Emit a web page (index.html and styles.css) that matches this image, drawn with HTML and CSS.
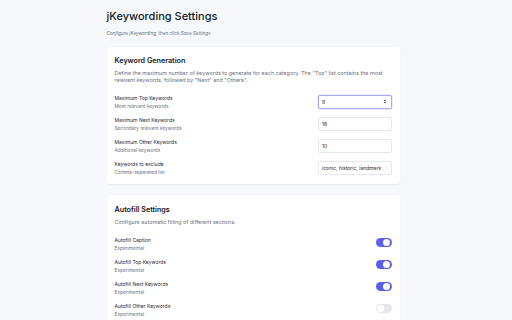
FILE: index.html
```html
<!DOCTYPE html>
<html lang="en">
  <head>
    <meta charset="UTF-8" />
    <meta name="viewport" content="width=device-width, initial-scale=1.0" />
    <title>jKeywording Settings</title>
    <link rel="stylesheet" href="styles.css">
  </head>
  <body>
    <div class="page">
      <h1 class="page-title">jKeywording Settings</h1>
      <p class="page-subtitle">Configure jKeywording, then click Save Settings</p>

      <div class="card">
        <h2 class="card-title">Keyword Generation</h2>
        <p class="card-desc">Define the maximum number of keywords to generate for each category. The "Top" list contains the most relevant keywords, followed by "Next" and "Others".</p>

        <div class="rows">
          <div class="row">
            <div class="row-text">
              <div class="row-label">Maximum Top Keywords</div>
              <div class="row-hint">Most relevant keywords</div>
            </div>
            <div class="field focused">
              <span class="field-value">9</span>
              <svg class="spinner" width="4" height="5" viewBox="0 0 4 5">
                <path d="M0.6 2 L2 0.6 L3.4 2 Z M0.6 3 L2 4.4 L3.4 3 Z" fill="#4b5563" />
              </svg>
            </div>
          </div>
          <div class="row">
            <div class="row-text">
              <div class="row-label">Maximum Next Keywords</div>
              <div class="row-hint">Secondary relevant keywords</div>
            </div>
            <div class="field"><span class="field-value">16</span></div>
          </div>
          <div class="row">
            <div class="row-text">
              <div class="row-label">Maximum Other Keywords</div>
              <div class="row-hint">Additional keywords</div>
            </div>
            <div class="field"><span class="field-value">10</span></div>
          </div>
          <div class="row">
            <div class="row-text">
              <div class="row-label">Keywords to exclude</div>
              <div class="row-hint">Comma-separated list</div>
            </div>
            <div class="field"><span class="field-value">iconic, historic, landmark</span></div>
          </div>
        </div>
      </div>

      <div class="card">
        <h2 class="card-title">Autofill Settings</h2>
        <p class="card-desc">Configure automatic filling of different sections.</p>

        <div class="rows">
          <div class="row">
            <div class="row-text">
              <div class="row-label">Autofill Caption</div>
              <div class="row-hint">Experimental</div>
            </div>
            <span class="toggle on"><span class="knob"></span></span>
          </div>
          <div class="row">
            <div class="row-text">
              <div class="row-label">Autofill Top Keywords</div>
              <div class="row-hint">Experimental</div>
            </div>
            <span class="toggle on"><span class="knob"></span></span>
          </div>
          <div class="row">
            <div class="row-text">
              <div class="row-label">Autofill Next Keywords</div>
              <div class="row-hint">Experimental</div>
            </div>
            <span class="toggle on"><span class="knob"></span></span>
          </div>
          <div class="row">
            <div class="row-text">
              <div class="row-label">Autofill Other Keywords</div>
              <div class="row-hint">Experimental</div>
            </div>
            <span class="toggle"><span class="knob"></span></span>
          </div>
        </div>
      </div>
    </div>
  </body>
</html>
```

FILE: styles.css
```css
body {
  margin: 0;
  padding: 0 6px 0 0;
  background-color: #f6f8fb;
  font-family: Inter, "Noto Sans", sans-serif;
  color: #111827;
}
.page {
  width: 293px;
  margin: 0 auto;
  padding-top: 10px;
}
.page-title {
  margin: 0;
  font-size: 11px;
  line-height: 13px;
  font-weight: 500;
  color: #111827;
}
.page-subtitle {
  margin: 7.5px 0 0;
  font-size: 4.6px;
  line-height: 6px;
  font-style: italic;
  color: #6b7280;
}
.card {
  margin-top: 10px;
  padding: 8px 8px 9px;
  background-color: #fff;
  border-radius: 3px;
  box-shadow: 0 0.5px 1.5px rgba(15, 23, 42, 0.06);
}
.card + .card {
  margin-top: 11px;
  padding-top: 9px;
}
.card-title {
  margin: 0;
  font-size: 7.2px;
  line-height: 11.2px;
  font-weight: 600;
  color: #111827;
}
.card-desc {
  margin: 4px 0 11px;
  font-size: 5.4px;
  line-height: 7px;
  color: #6b7280;
}
.rows {
  display: flex;
  flex-direction: column;
  gap: 8px;
}
.row {
  display: flex;
  justify-content: space-between;
  align-items: flex-start;
  min-height: 14px;
}
.row-label {
  font-size: 5px;
  line-height: 6px;
  font-weight: 400;
  color: #1f2937;
}
.row-hint {
  margin-top: 2px;
  font-size: 4.8px;
  line-height: 6px;
  color: #6b7280;
}
.field {
  box-sizing: border-box;
  width: 74px;
  height: 14px;
  display: flex;
  align-items: center;
  justify-content: space-between;
  padding: 0 4px 0 3.5px;
  border: 0.5px solid #e5e7eb;
  border-radius: 2px;
  background-color: #fff;
  font-size: 5px;
  color: #1f2937;
}
.field.focused {
  border: 0.75px solid #a5a8f5;
  box-shadow: 0 0 0 0.5px #dcdcfb;
}
.spinner {
  display: block;
}
.toggle {
  box-sizing: border-box;
  width: 16px;
  height: 9.5px;
  margin-top: 1px;
  padding: 1.25px;
  display: flex;
  justify-content: flex-start;
  border-radius: 5px;
  background-color: #e5e7eb;
}
.toggle.on {
  justify-content: flex-end;
  background-color: #5b5ef1;
}
.knob {
  width: 7px;
  height: 7px;
  border-radius: 50%;
  background-color: #fff;
}
```
